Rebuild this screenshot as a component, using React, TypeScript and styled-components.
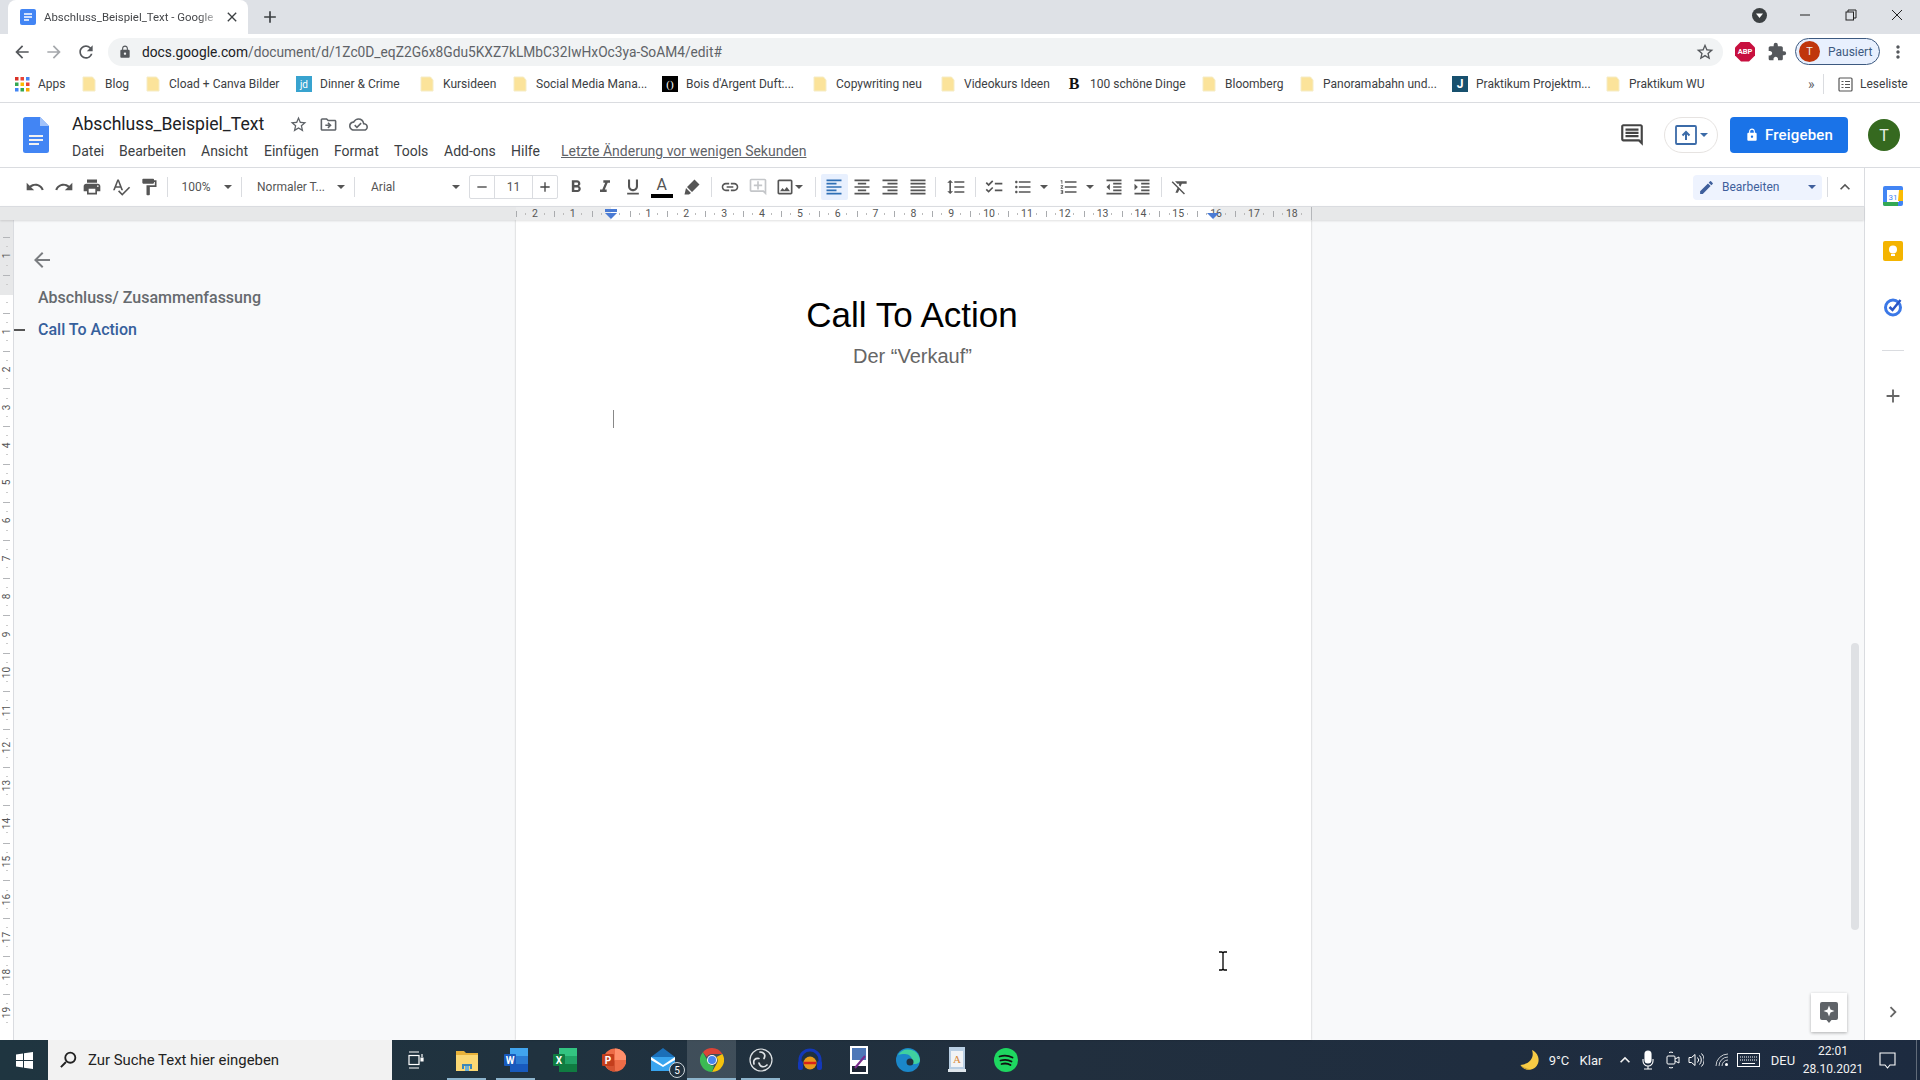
import React from "react";
import styled, { createGlobalStyle } from "styled-components";
import {
  MdArrowBack, MdArrowForward, MdRefresh, MdLock, MdStarBorder, MdExtension, MdMoreVert,
  MdOutlineDriveFileMove, MdOutlineCloudDone, MdOutlineComment, MdUndo, MdRedo, MdPrint,
  MdSpellcheck, MdFormatPaint, MdFormatBold, MdFormatItalic, MdFormatUnderlined,
  MdLink, MdOutlineAddComment, MdOutlineImage, MdFormatAlignLeft, MdFormatAlignCenter,
  MdFormatAlignRight, MdFormatAlignJustify, MdFormatLineSpacing, MdChecklist,
  MdFormatListBulleted, MdFormatListNumbered, MdFormatIndentDecrease, MdFormatIndentIncrease,
  MdFormatClear, MdEdit, MdKeyboardArrowUp, MdKeyboardArrowRight, MdAdd, MdRemove, MdClose,
  MdSearch,
} from "react-icons/md";

const Global = createGlobalStyle`
  html, body { margin: 0; padding: 0; width: 1920px; height: 1080px; overflow: hidden; background: #fff; }
  * { box-sizing: border-box; }
  body { font-family: Roboto, "Liberation Sans", sans-serif; color: #444; }
`;

const Root = styled.div`
  width: 1920px; height: 1080px; display: flex; flex-direction: column; overflow: hidden;
`;

/* ---------- browser chrome ---------- */
const TabStrip = styled.div`
  height: 34px; flex: none; background: #dee1e6; display: flex; align-items: stretch; padding-left: 8px;
`;
const Tab = styled.div`
  width: 240px; background: #fff; border-radius: 8px 8px 0 0; display: flex; align-items: center;
  padding: 0 8px 0 12px; gap: 8px;
`;
const TabTitle = styled.span`
  flex: 1; font-size: 11.4px; color: #45474a; white-space: nowrap;
  -webkit-mask-image: linear-gradient(90deg, #000 90%, rgba(0,0,0,.3));
  mask-image: linear-gradient(90deg, #000 90%, rgba(0,0,0,.3));
`;
const NewTab = styled.div`
  width: 44px; display: flex; align-items: center; justify-content: center; color: #3c4043; font-size: 20px;
`;
const Flex = styled.div`flex: 1;`;
const WinControls = styled.div`
  display: flex; align-items: center; height: 30px; color: #222;
`;
const WinButton = styled.div<{ $w: number }>`
  width: ${(p) => p.$w}px; display: flex; align-items: center; justify-content: center;
`;
const NavBar = styled.div`
  height: 29px; flex: none; display: flex; align-items: center; padding-left: 6px; background: #fff; margin-top: 3px;
`;
const NavBtn = styled.div<{ $muted?: boolean }>`
  width: 32px; display: flex; justify-content: center; font-size: 20px; color: ${(p) => (p.$muted ? "#a5a8ac" : "#55585c")};
`;
const Omnibox = styled.div`
  width: 1615px; height: 28px; margin-left: 6px; background: #f1f3f4; border-radius: 14px; display: flex;
  align-items: center; padding: 0 8px 0 10px; font-size: 13.75px; color: #5f6368;
`;
const Host = styled.span`color: #202124;`;
const LockSlot = styled.span`
  width: 24px; display: flex; font-size: 14px; color: #55585c;
`;
const AbpBadge = styled.span`
  width: 20px; height: 20px; margin-left: 12px; background: #c8103f; color: #fff; font-size: 7.5px; font-weight: 700;
  display: flex; align-items: center; justify-content: center;
  clip-path: polygon(30% 0, 70% 0, 100% 30%, 100% 70%, 70% 100%, 30% 100%, 0 70%, 0 30%);
`;
const NavIcon = styled.span<{ $w: number; $ml?: number }>`
  width: ${(p) => p.$w}px; margin-left: ${(p) => p.$ml ?? 0}px; display: flex; justify-content: center; font-size: 20px; color: #55585c;
`;
const Paused = styled.div`
  width: 85px; height: 27px; margin-left: 2px; border: 1px solid #3d5a80; border-radius: 14px; background: #e8f0fe;
  display: flex; align-items: center; gap: 8px; padding-left: 3px; font-size: 12px; color: #3d5a80;
`;
const PausedAvatar = styled.span`
  width: 21px; height: 21px; border-radius: 50%; background: #c0360c; color: #eee; font-size: 11px;
  display: flex; align-items: center; justify-content: center;
`;

const Bookmarks = styled.div`
  height: 37px; flex: none; display: flex; align-items: center; padding-left: 15px; border-bottom: 1px solid #dadce0;
  font-size: 12px; color: #3c4043; background: #fff;
`;
const Bookmark = styled.div<{ $w: number }>`
  width: ${(p) => p.$w}px; display: flex; align-items: center; gap: 8px; white-space: nowrap; flex: none;
`;
const FavJd = styled.span`
  width: 16px; height: 16px; background: #38a3cf; color: #fff; font-size: 10px; display: flex; align-items: center; justify-content: center; flex: none;
`;
const FavBois = styled(FavJd)`background: #000; font-family: "Liberation Serif", serif; font-size: 11px;`;
const FavB = styled(FavJd)`background: transparent; color: #111; font-family: "Liberation Serif", serif; font-weight: 700; font-size: 16px;`;
const FavJ = styled(FavJd)`background: #17506e; font-weight: 700; font-size: 12px;`;
const BmEnd = styled.div`
  display: flex; align-items: center; color: #3c4043; flex: none;
`;
const Chevrons = styled.span`width: 13px; font-size: 14px; color: #5f6368;`;
const BmSep = styled.span`width: 1px; height: 20px; background: #dadce0; margin: 0 14px 0 2px;`;

/* ---------- docs header ---------- */
const DocHeader = styled.div`
  height: 65px; flex: none; display: flex; align-items: center; padding: 0 20px 0 23px; border-bottom: 1px solid #dadce0; background: #fff;
`;
const TitleCol = styled.div`
  margin-left: 23px; display: flex; flex-direction: column; align-self: flex-start; padding-top: 10px;
`;
const TitleRow = styled.div`
  display: flex; align-items: center; height: 22px;
`;
const DocTitle = styled.span`
  font-size: 17.6px; color: #202124; width: 211px;
`;
const TitleIcon = styled.span<{ $w: number }>`
  width: ${(p) => p.$w}px; display: flex; justify-content: center; font-size: 19px; color: #5f6368;
`;
const MenuRow = styled.div`
  display: flex; align-items: center; height: 26px; font-size: 14px; color: #3c4043; margin-top: 3px;
`;
const MenuItem = styled.span<{ $w: number }>`
  width: ${(p) => p.$w}px; white-space: nowrap;
`;
const LastEdit = styled.span`
  margin-left: 20px; color: #5f6368; text-decoration: underline; white-space: nowrap;
`;
const CommentBtn = styled.span`
  font-size: 26px; display: flex; color: #444; margin-right: 19px;
`;
const PresentBtn = styled.div`
  width: 54px; height: 36px; border: 1px solid #e6e3e1; border-radius: 18px; display: flex; align-items: center; justify-content: center; gap: 3px; color: #3b6ba8; margin-right: 12px;
`;
const ShareBtn = styled.div`
  width: 118px; height: 36px; background: #1a73e8; color: #fff; border-radius: 4px; display: flex; align-items: center; justify-content: center; gap: 6px;
  font-size: 15px; font-weight: 500; letter-spacing: 0.2px; margin-right: 20px;
`;
const Avatar = styled.div`
  width: 32px; height: 32px; border-radius: 50%; background: #35691f; color: #e8efe4; font-size: 16px; display: flex; align-items: center; justify-content: center;
`;

/* ---------- workspace ---------- */
const Workspace = styled.div`
  flex: 1; display: flex; min-height: 0;
`;
const Main = styled.div`
  flex: 1; display: flex; flex-direction: column; min-width: 0;
`;
const Toolbar = styled.div`
  height: 38px; flex: none; display: flex; align-items: center; padding-left: 21px; padding-right: 6px; background: #fff; color: #555;
`;
const Cell = styled.div<{ $w: number; $ml?: number; $active?: boolean; $faded?: boolean }>`
  width: ${(p) => p.$w}px; height: 26px; margin-left: ${(p) => p.$ml ?? 0}px; flex: none; display: flex; align-items: center; justify-content: center;
  font-size: 20px; border-radius: 2px; color: ${(p) => (p.$active ? "#2f6fb5" : p.$faded ? "#c4c6c9" : "#555")};
  background: ${(p) => (p.$active ? "#e8f0fe" : "transparent")};
`;
const SplitCell = styled(Cell)<{ $pl: number }>`
  justify-content: flex-start; padding-left: ${(p) => p.$pl}px;
`;
const Sep = styled.span<{ $ml: number; $mr: number }>`
  width: 1px; height: 20px; background: #dadce0; flex: none; margin: 0 ${(p) => p.$mr}px 0 ${(p) => p.$ml}px;
`;
const Drop = styled.div<{ $w: number; $pl: number }>`
  width: ${(p) => p.$w}px; padding-left: ${(p) => p.$pl}px; padding-right: 6px; flex: none; height: 26px; display: flex; align-items: center; justify-content: space-between;
  font-size: 12px; color: #555; white-space: nowrap;
`;
const Caret = styled.span<{ $c?: string; $ml?: number }>`
  width: 0; height: 0; margin-left: ${(p) => p.$ml ?? 0}px; border-left: 4px solid transparent; border-right: 4px solid transparent; border-top: 4px solid ${(p) => p.$c ?? "#555"}; flex: none;
`;
const SizeBox = styled.div`
  width: 89px; height: 24px; margin-left: 3px; border: 1px solid #dadce0; border-radius: 2px; display: flex; align-items: center; flex: none;
`;
const SizeBtn = styled.span`
  width: 24px; height: 100%; display: flex; align-items: center; justify-content: center; font-size: 16px; color: #444; flex: none;
`;
const SizeValue = styled.span`
  flex: 1; height: 100%; border-left: 1px solid #dadce0; border-right: 1px solid #dadce0; display: flex; align-items: center; justify-content: center; font-size: 12px; color: #555;
`;
const TextColor = styled.span`
  display: flex; flex-direction: column; align-items: center; font-size: 16px; color: #555; line-height: 16px;
`;
const ColorBar = styled.span`
  width: 22px; height: 4px; background: #000; margin-top: 1px;
`;
const EditMode = styled.div`
  width: 129px; height: 25px; margin-left: auto; background: #eef3fe; border-radius: 4px; display: flex; align-items: center; padding: 0 6px 0 5px; gap: 7px; font-size: 12px; color: #3f5f9c; flex: none;
`;
const EditIcon = styled.span`display: flex; font-size: 17px;`;
const EditLabel = styled.span`flex: 1;`;

const Ruler = styled.div`
  height: 14px; flex: none; background: #e7e8e9; border-top: 1px solid #dadce0; box-shadow: 0 1px 2px rgba(0,0,0,.12); display: flex; padding-left: 516px; position: relative; z-index: 2;
`;
const RulerTrack = styled.div`
  display: flex; background: linear-gradient(90deg, #ebeced 95px, #fff 95px, #fff 697px, #ebeced 697px);
  border-right: 1px solid #b5b7ba;
`;
const RulerCell = styled.div`
  width: 37.85px; flex: none; display: flex; align-items: center; justify-content: center; font-size: 10.5px; color: #555;
  background-image: linear-gradient(#a9abae, #a9abae), linear-gradient(#bbb, #bbb), linear-gradient(#bbb, #bbb);
  background-size: 1px 6px, 1px 2px, 1px 2px;
  background-position: 0 center, 25% center, 75% center;
  background-repeat: no-repeat;
`;
const MarginMark = styled.span<{ $x: number }>`
  position: absolute; left: ${(p) => p.$x}px; top: 6px; width: 0; height: 0;
  border-left: 6px solid transparent; border-right: 6px solid transparent; border-top: 6px solid #4a7bd4;
`;
const IndentMark = styled.span<{ $x: number }>`
  position: absolute; left: ${(p) => p.$x}px; top: 2px; width: 12px; height: 3px; background: #4a7bd4;
`;
const Content = styled.div`
  flex: 1; display: flex; min-height: 0; background: #f8f9fa; position: relative;
`;
const VRuler = styled.div`
  width: 14px; flex: none; border-right: 1px solid #dadce0; overflow: hidden; padding-top: 17px;
  background: linear-gradient(#e7e8e9 0 75px, #fff 75px);
`;
const VCell = styled.div`
  height: 37.85px; display: flex; align-items: center; justify-content: center; font-size: 10px; color: #555;
  background-image: linear-gradient(#b4b6b9, #b4b6b9), linear-gradient(#ccc, #ccc), linear-gradient(#ccc, #ccc);
  background-size: 7px 1px, 2px 1px, 2px 1px;
  background-position: center 0, center 25%, center 75%;
  background-repeat: no-repeat;
`;
const VNum = styled.span`transform: rotate(-90deg);`;
const Sidebar = styled.div`
  width: 502px; flex: none; padding-top: 28px;
`;
const BackIcon = styled.div`
  margin-left: 16px; font-size: 24px; height: 24px; display: flex; color: #7a7d80;
`;
const OutlineHead = styled.div`
  margin: 16px 0 0 24px; font-size: 16px; line-height: 20px; font-weight: 500; color: #666a6e;
`;
const OutlineRow = styled.div`
  margin-top: 12px; display: flex; align-items: center; gap: 13px; font-size: 16px; line-height: 20px; font-weight: 500; color: #36609c;
`;
const Dash = styled.span`
  width: 11px; height: 1.5px; background: #555;
`;
const Page = styled.div`
  width: 795px; flex: none; background: #fff; box-shadow: 0 0 2px rgba(0,0,0,.25); padding-top: 75px;
  font-family: "Liberation Sans", Arial, sans-serif; display: flex; flex-direction: column;
`;
const PageTitle = styled.div`
  text-align: center; font-size: 35px; line-height: 40px; color: #000; padding-right: 3px;
`;
const PageSub = styled.div`
  text-align: center; font-size: 20px; line-height: 24px; color: #666; margin-top: 9px; padding-right: 2px;
`;
const Caret2 = styled.span`
  width: 1px; height: 18px; background: #888; margin: 42px 0 0 97px;
`;
const Scrollbar = styled.div`
  position: absolute; left: 1851px; top: 423px; width: 8px; height: 287px; background: #dfe1e4; border-radius: 4px;
`;
const ExploreBtn = styled.div`
  position: absolute; left: 1811px; top: 773px; width: 36px; height: 39px; background: #fff; box-shadow: 0 1px 3px rgba(0,0,0,.3); display: flex; align-items: center; justify-content: center;
`;
const IBeam = styled.div`
  position: absolute; left: 1218px; top: 731px; display: flex;
`;
const SidePanel = styled.div`
  width: 56px; flex: none; border-left: 1px solid #dadce0; display: flex; flex-direction: column; align-items: center; padding-top: 18px; background: #fff; position: relative;
`;
const SideApp = styled.div<{ $mt: number }>`
  margin-top: ${(p) => p.$mt}px; height: 20px; display: flex; align-items: center; justify-content: center;
`;
const SideSep = styled.span`
  width: 22px; height: 1px; background: #dadce0; margin-top: 33px;
`;
const SidePlus = styled.span`
  font-size: 22px; display: flex; color: #666; margin-top: 34px;
`;
const SideChevron = styled.span`
  margin-top: auto; margin-bottom: 17px; font-size: 22px; display: flex; color: #666;
`;

/* ---------- taskbar ---------- */
const Taskbar = styled.div`
  height: 40px; flex: none; display: flex; align-items: stretch; background: linear-gradient(90deg, #1f3540, #212f3e 55%, #1d2b40); color: #fff;
`;
const StartBtn = styled.div`
  width: 48px; flex: none; display: flex; align-items: center; justify-content: center;
`;
const SearchBox = styled.div`
  width: 344px; flex: none; background: #f2f2f2; display: flex; align-items: center; padding-left: 9px; gap: 9px; color: #222; font-size: 14.9px;
`;
const TaskSlot = styled.div<{ $w: number; $ml?: number; $run?: boolean; $hi?: boolean }>`
  width: ${(p) => p.$w}px; margin-left: ${(p) => p.$ml ?? 0}px; flex: none; display: flex; align-items: center; justify-content: center; position: relative;
  background: ${(p) => (p.$hi ? "rgba(255,255,255,.14)" : "transparent")};
  &::after {
    content: "";
    display: ${(p) => (p.$run ? "block" : "none")};
    position: absolute; bottom: 0; height: 2px; background: #8db4cc;
    left: ${(p) => (p.$hi ? 0 : 5)}px; right: ${(p) => (p.$hi ? 0 : 5)}px;
  }
`;
const MailBadge = styled.span`
  position: absolute; right: 2px; bottom: 2px; width: 16px; height: 16px; border-radius: 50%; background: #22323f; border: 1px solid #cfd6dc; color: #fff;
  font-size: 10px; display: flex; align-items: center; justify-content: center;
`;
const Tray = styled.div`
  margin-left: auto; display: flex; align-items: center; font-size: 13px; color: #f2f2f2; flex: none;
`;
const TrayItem = styled.div<{ $w: number; $ml?: number }>`
  width: ${(p) => p.$w}px; margin-left: ${(p) => p.$ml ?? 0}px; display: flex; align-items: center; justify-content: center; flex: none;
`;
const Clock = styled.div`
  width: 72px; display: flex; flex-direction: column; align-items: center; font-size: 12px; line-height: 18px; flex: none;
`;
const TrayEdge = styled.span`
  width: 4px; height: 40px; margin-left: 11px; border-left: 1px solid rgba(255,255,255,.3); flex: none;
`;

const DocFav = () => (
  <svg width="16" height="16" viewBox="0 0 16 16" style={{ flex: "none" }}>
    <rect width="16" height="16" rx="2" fill="#4285f4" />
    <path d="M4 5h8M4 8h8M4 11h5" stroke="#fff" strokeWidth="1.5" />
  </svg>
);
const DocLogo = () => (
  <svg width="26" height="36" viewBox="0 0 26 36" style={{ flex: "none" }}>
    <path d="M2.5 0H17l9 9v24.5a2.5 2.5 0 0 1-2.5 2.5h-21A2.5 2.5 0 0 1 0 33.5v-31A2.5 2.5 0 0 1 2.5 0z" fill="#4285f4" />
    <path d="M17 0l9 9h-9z" fill="#a1c2fa" />
    <path d="M6 18h14v2H6zM6 22h14v2H6zM6 26h10v2H6z" fill="#f1f1f1" />
  </svg>
);
const Folder = () => (
  <svg width="15" height="16" viewBox="0 0 15 16" style={{ flex: "none" }}>
    <path d="M1 1h9.5L13 4v11H1z" fill="#fbe39a" stroke="#f5ecc6" />
  </svg>
);
const AppsIcon = () => (
  <svg width="15" height="15" viewBox="0 0 15 15" style={{ flex: "none" }}>
    {[0, 1, 2].flatMap((r) =>
      [0, 1, 2].map((c) => (
        <rect key={`${r}${c}`} x={c * 5.5} y={r * 5.5} width="3.5" height="3.5"
          fill={[["#d93025", "#ea4335", "#4285f4"], ["#34a853", "#fbbc04", "#ea4335"], ["#4285f4", "#34a853", "#f9ab00"]][r][c]} />
      ))
    )}
  </svg>
);
const ReadingList = () => (
  <svg width="15" height="15" viewBox="0 0 15 15" fill="none" stroke="#555" strokeWidth="1.2" style={{ marginRight: 7 }}>
    <rect x="1" y="1" width="13" height="13" rx="1" />
    <path d="M3.5 4.5h2M3.5 7.5h2M3.5 10.5h2M7 4.5h5M7 7.5h5M7 10.5h5" />
  </svg>
);
const ProfileDot = () => (
  <svg width="17" height="17" viewBox="0 0 17 17">
    <circle cx="8.5" cy="8.5" r="7.5" fill="#3c4043" />
    <path d="M5 6.5h7L8.5 11z" fill="#fff" />
  </svg>
);
const PresentIcon = () => (
  <svg width="22" height="20" viewBox="0 0 22 20" fill="none">
    <rect x="1" y="1" width="20" height="18" rx="1" stroke="#3b6ba8" strokeWidth="1.8" />
    <path d="M11 15V8M7.5 10.5L11 7l3.5 3.5" stroke="#3b6ba8" strokeWidth="2" />
  </svg>
);
const HighlightPen = () => (
  <svg width="18" height="18" viewBox="0 0 18 18">
    <path d="M11.5 1.5l5 5-7.5 7.5-5-5zM3 10l5 5-2 1.5H1.5z" fill="#555" />
  </svg>
);
const CalendarIcon = () => (
  <svg width="20" height="20" viewBox="0 0 20 20">
    <rect width="20" height="20" rx="2" fill="#4285f4" />
    <rect x="4" y="4" width="12" height="12" fill="#fff" />
    <path d="M0 16h15v4H2a2 2 0 0 1-2-2z" fill="#34a853" />
    <path d="M16 4h4v11h-5z" fill="#fbbc04" />
    <text x="10" y="14" textAnchor="middle" fontSize="8" fontFamily="Roboto" fill="#4285f4">31</text>
  </svg>
);
const KeepIcon = () => (
  <svg width="20" height="20" viewBox="0 0 20 20">
    <rect width="20" height="20" rx="2" fill="#f4b400" />
    <circle cx="10" cy="8.5" r="4" fill="#fff" />
    <rect x="8" y="13" width="4" height="2" fill="#fff" />
  </svg>
);
const TasksIcon = () => (
  <svg width="20" height="20" viewBox="0 0 20 20" fill="none">
    <circle cx="10" cy="10.5" r="7.5" stroke="#3b78e7" strokeWidth="3" />
    <path d="M6.5 10l3 3 8-10" stroke="#2a56c6" strokeWidth="2.5" />
  </svg>
);
const ExploreIcon = () => (
  <svg width="18" height="22" viewBox="0 0 18 22">
    <path d="M2 0h14a2 2 0 0 1 2 2v14a2 2 0 0 1-2 2h-4.5L9 21l-2.5-3H2a2 2 0 0 1-2-2V2a2 2 0 0 1 2-2z" fill="#5f6368" />
    <path d="M9 3.5l1.5 4 4 1.5-4 1.5-1.5 4-1.5-4-4-1.5 4-1.5z" fill="#fff" />
  </svg>
);
const IBeamIcon = () => (
  <svg width="10" height="20" viewBox="0 0 10 20" fill="none">
    <path d="M1 1h3l1 1 1-1h3M5 2v16M1 19h3l1-1 1 1h3" stroke="#000" strokeWidth="1.3" />
  </svg>
);
const WinLogo = () => (
  <svg width="17" height="17" viewBox="0 0 17 17">
    <path d="M0 2.4L7 1.4V8H0zM8 1.3L17 0v8H8zM0 9h7v6.6L0 14.6zM8 9h9v8l-9-1.3z" fill="#fff" />
  </svg>
);
const TaskView = () => (
  <svg width="16" height="20" viewBox="0 0 16 20" fill="none" stroke="#fff" strokeWidth="1.2">
    <rect x="1" y="5.5" width="10" height="9" />
    <path d="M1 2h10M1 18h10M14 4v3" />
    <path d="M13 8h2v3h-2z" fill="#fff" />
  </svg>
);
const Explorer = () => (
  <svg width="22" height="24" viewBox="0 0 22 24">
    <path d="M0 3h8l2 2h12v18H0z" fill="#e8b23a" />
    <path d="M0 7h22v16H0z" fill="#fbd874" />
    <path d="M6 16h10v5h-2v-3H8v3H6z" fill="#3d87b8" />
    <rect x="9" y="18" width="4" height="5" fill="#6db1d8" />
  </svg>
);
const OfficeIcon = ({ dark, light, mid, letter }: { dark: string; light: string; mid: string; letter: string }) => (
  <svg width="24" height="26" viewBox="0 0 24 26">
    <rect x="6" y="1" width="18" height="24" rx="1.5" fill={mid} />
    <rect x="6" y="1" width="18" height="8" fill={light} />
    <rect x="6" y="17" width="18" height="8" fill={dark} />
    <rect x="0" y="7" width="12" height="12" rx="1" fill={dark} />
    <text x="6" y="16.5" textAnchor="middle" fontSize="10" fontWeight="700" fontFamily="Roboto" fill="#fff">{letter}</text>
  </svg>
);
const Ppt = () => (
  <svg width="24" height="26" viewBox="0 0 24 26">
    <circle cx="13" cy="13" r="11.5" fill="#ed6c47" />
    <path d="M13 1.5A11.5 11.5 0 0 1 24.5 13H13z" fill="#ff8f6b" />
    <path d="M13 13v11.5A11.5 11.5 0 0 1 4 20z" fill="#d35230" />
    <rect x="0" y="7" width="12" height="12" rx="1" fill="#c43e1c" />
    <text x="6" y="16.5" textAnchor="middle" fontSize="10" fontWeight="700" fontFamily="Roboto" fill="#fff">P</text>
  </svg>
);
const MailIcon = () => (
  <svg width="24" height="26" viewBox="0 0 24 26">
    <path d="M12 1l12 9H0z" fill="#1b6fb8" />
    <path d="M0 10h24v14H0z" fill="#38a4ee" />
    <path d="M0 10l12 8 12-8v3l-12 7L0 13z" fill="#fff" />
  </svg>
);
const ChromeIcon = () => (
  <svg width="24" height="24" viewBox="0 0 24 24">
    <path d="M12 0a12 12 0 0 1 10.4 6H12a6 6 0 0 0-5.2 3L2.9 4.2A12 12 0 0 1 12 0z" fill="#db4437" />
    <path d="M22.4 6A12 12 0 0 1 12 24l4.8-8.5A6 6 0 0 0 16.5 9z" fill="#f4c20d" />
    <path d="M12 24A12 12 0 0 1 2.9 4.2L7.5 12.500A6 6 0 0 0 14 17.700z" fill="#3cba54" />
    <circle cx="12" cy="12" r="5" fill="#fff" />
    <circle cx="12" cy="12" r="4" fill="#4885ed" />
  </svg>
);
const ObsIcon = () => (
  <svg width="24" height="24" viewBox="0 0 24 24" fill="none">
    <circle cx="12" cy="12" r="11" fill="#27323b" stroke="#dfe3e6" strokeWidth="1.2" />
    <path d="M11 4c4 0 6 3 4 6.5M5 16c-1-4 1-6 5-5.5M18 17c-3 3-7 2-8-2" stroke="#dfe3e6" strokeWidth="1.7" strokeLinecap="round" />
    <circle cx="12" cy="12" r="1.2" fill="#27323b" />
  </svg>
);
const AudacityIcon = () => (
  <svg width="26" height="24" viewBox="0 0 26 24" fill="none">
    <path d="M3 17V12a10 10 0 0 1 20 0v5" stroke="#1438b8" strokeWidth="3" />
    <rect x="1" y="13" width="5" height="9" rx="2" fill="#1438b8" />
    <rect x="20" y="13" width="5" height="9" rx="2" fill="#1438b8" />
    <circle cx="13" cy="15" r="6.5" fill="#e89a1c" />
    <path d="M7 15h12" stroke="#d8211a" strokeWidth="2.5" />
  </svg>
);
const WritingIcon = () => (
  <svg width="18" height="28" viewBox="0 0 18 28">
    <rect width="18" height="28" fill="#fff" />
    <path d="M2 2h14v12H2z" fill="#4e78b8" />
    <path d="M2 20h14v6H2z" fill="#1c2433" />
    <path d="M15 10L5 22" stroke="#7a2a8c" strokeWidth="2" />
  </svg>
);
const EdgeIcon = () => (
  <svg width="24" height="26" viewBox="0 0 24 26">
    <circle cx="12" cy="13" r="12" fill="#1b87c9" />
    <path d="M2 8A12 12 0 0 1 24 13c0 3-3 4.5-6 4-3 0-2-2-2-4 0-3-3-6-7-6-3 0-5 0-7 1z" fill="#3fd0a0" />
    <circle cx="14" cy="15" r="3.5" fill="#21303d" />
  </svg>
);
const FontIcon = () => (
  <svg width="18" height="26" viewBox="0 0 18 26">
    <rect x="1" y="0" width="16" height="24" fill="#b9cfe4" />
    <rect x="3" y="4" width="12" height="16" fill="#f2f4f6" />
    <text x="9" y="16" textAnchor="middle" fontSize="11" fontFamily="Liberation Serif" fill="#d98a3c">A</text>
    <rect x="0" y="22" width="18" height="3" fill="#dfe6ec" />
  </svg>
);
const SpotifyIcon = () => (
  <svg width="24" height="24" viewBox="0 0 24 24" fill="none">
    <circle cx="12" cy="12" r="12" fill="#1ed760" />
    <path d="M5.5 8.5c4-1.2 9-1 13 1M6.5 12.5c3.5-1 8-.8 11 1M7.5 16c3-.8 6.5-.6 9 1" stroke="#111" strokeWidth="1.8" strokeLinecap="round" />
  </svg>
);
const Moon = () => (
  <svg width="19" height="20" viewBox="0 0 19 20">
    <path d="M12 0c2.5 7-1.5 14-11.5 15C3 19 7.5 20.5 11 19.5 17 18 20 12 18 6.500 17 3.500 14.500 1 12 0z" fill="#f7cb45" />
    <path d="M.5 15C3 19 7.500 20.500 11 19.500 8 19 4 18 .5 15z" fill="#c9a02e" />
  </svg>
);
const Mic = () => (
  <svg width="12" height="20" viewBox="0 0 12 20" fill="none" stroke="#fff" strokeWidth="1.1">
    <rect x="3" y="1" width="6" height="12" rx="3" fill="#fff" />
    <path d="M1 9v2a5 5 0 0 0 10 0V9M6 16v3M2 19h8" />
  </svg>
);
const Cam = () => (
  <svg width="14" height="20" viewBox="0 0 14 20" fill="none" stroke="#fff" strokeWidth="1">
    <rect x="1" y="6" width="8" height="8" rx="1" />
    <path d="M9 9l4-2v6l-4-2M3 2.5a5 5 0 0 1 4 0M3 17.5a5 5 0 0 0 4 0" />
  </svg>
);
const Speaker = () => (
  <svg width="16" height="16" viewBox="0 0 16 16" fill="none" stroke="#fff" strokeWidth="1">
    <path d="M1 5.5h2.5L7 2.5v11l-3.500-3H1zM9.500 5.500a3.500 3.500 0 0 1 0 5M11.500 3.500a6.500 6.500 0 0 1 0 9M13.500 1.500a9 9 0 0 1 0 13" />
  </svg>
);
const Wifi = () => (
  <svg width="14" height="14" viewBox="0 0 14 14" fill="none" stroke="#c8ccd0" strokeWidth="1">
    <path d="M1 13A12 12 0 0 1 13 1M4 13a9 9 0 0 1 9-9M7 13a6 6 0 0 1 6-6" />
    <circle cx="11.5" cy="11.5" r="1.5" fill="#fff" stroke="none" />
  </svg>
);
const Keyboard = () => (
  <svg width="23" height="14" viewBox="0 0 23 14" fill="none" stroke="#fff" strokeWidth="1">
    <rect x=".5" y=".5" width="22" height="13" />
    <path d="M3 4h17M3 7h17" strokeDasharray="1 1" />
    <path d="M5 10.5h13" />
  </svg>
);
const Notify = () => (
  <svg width="17" height="17" viewBox="0 0 17 17" fill="none" stroke="#fff" strokeWidth="1.1">
    <path d="M1 1h15v12h-5l-2.5 3L6 13H1z" />
  </svg>
);

const bookmarks: { w: number; label: string; icon: React.ReactNode }[] = [
  { w: 67, label: "Apps", icon: <AppsIcon /> },
  { w: 64, label: "Blog", icon: <Folder /> },
  { w: 150, label: "Cload + Canva Bilder", icon: <Folder /> },
  { w: 124, label: "Dinner & Crime", icon: <FavJd>jd</FavJd> },
  { w: 93, label: "Kursideen", icon: <Folder /> },
  { w: 149, label: "Social Media Mana...", icon: <Folder /> },
  { w: 151, label: "Bois d'Argent Duft:...", icon: <FavBois>()</FavBois> },
  { w: 128, label: "Copywriting neu", icon: <Folder /> },
  { w: 125, label: "Videokurs Ideen", icon: <Folder /> },
  { w: 136, label: "100 schöne Dinge", icon: <FavB>B</FavB> },
  { w: 98, label: "Bloomberg", icon: <Folder /> },
  { w: 152, label: "Panoramabahn und...", icon: <Folder /> },
  { w: 154, label: "Praktikum Projektm...", icon: <FavJ>J</FavJ> },
  { w: 202, label: "Praktikum WU", icon: <Folder /> },
];
const menu: [string, number][] = [
  ["Datei", 47], ["Bearbeiten", 82], ["Ansicht", 63], ["Einfügen", 70], ["Format", 60],
  ["Tools", 50], ["Add-ons", 67], ["Hilfe", 30],
];
const rulerNums = ["2", "1", "", "1", "2", "3", "4", "5", "6", "7", "8", "9", "10", "11", "12", "13", "14", "15", "16", "17", "18"];
const vNums = ["1", "", ...Array.from({ length: 19 }, (_, i) => String(i + 1))];

export default function App() {
  return (
    <Root>
      <Global />
      <TabStrip>
        <Tab>
          <DocFav />
          <TabTitle>Abschluss_Beispiel_Text - Google</TabTitle>
          <MdClose size={16} color="#3c4043" />
        </Tab>
        <NewTab><MdAdd /></NewTab>
        <Flex />
        <WinControls>
          <WinButton $w={46}><ProfileDot /></WinButton>
          <WinButton $w={46}>
            <svg width="12" height="12" viewBox="0 0 12 12"><path d="M1 6h10" stroke="#222" /></svg>
          </WinButton>
          <WinButton $w={46}>
            <svg width="12" height="12" viewBox="0 0 12 12" fill="none" stroke="#222"><rect x="1" y="3" width="7.5" height="8" /><path d="M3 3V1h8v8H8.5" /></svg>
          </WinButton>
          <WinButton $w={46}>
            <svg width="12" height="12" viewBox="0 0 12 12" stroke="#222"><path d="M1 1l10 10M11 1L1 11" /></svg>
          </WinButton>
        </WinControls>
      </TabStrip>

      <NavBar>
        <NavBtn><MdArrowBack /></NavBtn>
        <NavBtn $muted><MdArrowForward /></NavBtn>
        <NavBtn><MdRefresh /></NavBtn>
        <Omnibox>
          <LockSlot><MdLock /></LockSlot>
          <Host>docs.google.com</Host>/document/d/1Zc0D_eqZ2G6x8Gdu5KXZ7kLMbC32IwHxOc3ya-SoAM4/edit#
          <Flex />
          <NavIcon $w={20}><MdStarBorder /></NavIcon>
        </Omnibox>
        <AbpBadge>ABP</AbpBadge>
        <NavIcon $w={32} $ml={6}><MdExtension /></NavIcon>
        <Paused><PausedAvatar>T</PausedAvatar>Pausiert</Paused>
        <NavIcon $w={36}><MdMoreVert /></NavIcon>
      </NavBar>

      <Bookmarks>
        {bookmarks.map((b) => (
          <Bookmark key={b.label} $w={b.w}>{b.icon}{b.label}</Bookmark>
        ))}
        <BmEnd>
          <Chevrons>»</Chevrons>
          <BmSep />
          <ReadingList />
          Leseliste
        </BmEnd>
      </Bookmarks>

      <DocHeader>
        <DocLogo />
        <TitleCol>
          <TitleRow>
            <DocTitle>Abschluss_Beispiel_Text</DocTitle>
            <TitleIcon $w={30}><MdStarBorder /></TitleIcon>
            <TitleIcon $w={30}><MdOutlineDriveFileMove /></TitleIcon>
            <TitleIcon $w={30}><MdOutlineCloudDone /></TitleIcon>
          </TitleRow>
          <MenuRow>
            {menu.map(([m, w]) => <MenuItem key={m} $w={w}>{m}</MenuItem>)}
            <LastEdit>Letzte Änderung vor wenigen Sekunden</LastEdit>
          </MenuRow>
        </TitleCol>
        <Flex />
        <CommentBtn><MdOutlineComment /></CommentBtn>
        <PresentBtn><PresentIcon /><Caret $c="#3b6ba8" /></PresentBtn>
        <ShareBtn><MdLock size={14} />Freigeben</ShareBtn>
        <Avatar>T</Avatar>
      </DocHeader>

      <Workspace>
        <Main>
          <Toolbar>
            <Cell $w={28.5}><MdUndo /></Cell>
            <Cell $w={28.5}><MdRedo /></Cell>
            <Cell $w={28.5}><MdPrint /></Cell>
            <Cell $w={28}><MdSpellcheck /></Cell>
            <Cell $w={28}><MdFormatPaint /></Cell>
            <Sep $ml={4} $mr={3} />
            <Drop $w={67.5} $pl={11}>100%<Caret /></Drop>
            <Sep $ml={3} $mr={3} />
            <Drop $w={106} $pl={12}>Normaler T...<Caret /></Drop>
            <Sep $ml={3} $mr={3} />
            <Drop $w={108} $pl={13}>Arial<Caret /></Drop>
            <SizeBox>
              <SizeBtn><MdRemove /></SizeBtn>
              <SizeValue>11</SizeValue>
              <SizeBtn><MdAdd /></SizeBtn>
            </SizeBox>
            <Cell $w={28.5} $ml={4}><MdFormatBold /></Cell>
            <Cell $w={28.5}><MdFormatItalic /></Cell>
            <Cell $w={28.5}><MdFormatUnderlined /></Cell>
            <Cell $w={28.5}><TextColor>A<ColorBar /></TextColor></Cell>
            <Cell $w={31}><HighlightPen /></Cell>
            <Sep $ml={3.5} $mr={4} />
            <Cell $w={28.5}><MdLink /></Cell>
            <Cell $w={28.5} $faded><MdOutlineAddComment /></Cell>
            <SplitCell $w={42} $pl={2}><MdOutlineImage /><Caret /></SplitCell>
            <Sep $ml={0} $mr={5} />
            <Cell $w={27} $active><MdFormatAlignLeft /></Cell>
            <Cell $w={28}><MdFormatAlignCenter /></Cell>
            <Cell $w={28}><MdFormatAlignRight /></Cell>
            <Cell $w={28}><MdFormatAlignJustify /></Cell>
            <Sep $ml={3} $mr={3} />
            <Cell $w={28} $ml={3}><MdFormatLineSpacing /></Cell>
            <Sep $ml={5} $mr={3} />
            <Cell $w={28} $ml={1}><MdChecklist /></Cell>
            <SplitCell $w={43} $ml={1} $pl={4}><MdFormatListBulleted /><Caret $ml={7} /></SplitCell>
            <SplitCell $w={43} $ml={3} $pl={4}><MdFormatListNumbered /><Caret $ml={7} /></SplitCell>
            <Cell $w={28} $ml={2}><MdFormatIndentDecrease /></Cell>
            <Cell $w={28}><MdFormatIndentIncrease /></Cell>
            <Sep $ml={5} $mr={4} />
            <Cell $w={28}><MdFormatClear /></Cell>
            <EditMode>
              <EditIcon><MdEdit /></EditIcon>
              <EditLabel>Bearbeiten</EditLabel>
              <Caret $c="#3f5f9c" />
            </EditMode>
            <Sep $ml={5} $mr={4} />
            <Cell $w={26}><MdKeyboardArrowUp /></Cell>
          </Toolbar>
          <Ruler>
            <RulerTrack>
              {rulerNums.map((n, i) => <RulerCell key={i}>{n}</RulerCell>)}
            </RulerTrack>
            <IndentMark $x={605} />
            <MarginMark $x={605} />
            <MarginMark $x={1207} />
          </Ruler>
          <Content>
            <VRuler>
              {vNums.map((n, i) => <VCell key={i}><VNum>{n}</VNum></VCell>)}
            </VRuler>
            <Sidebar>
              <BackIcon><MdArrowBack /></BackIcon>
              <OutlineHead>Abschluss/ Zusammenfassung</OutlineHead>
              <OutlineRow><Dash />Call To Action</OutlineRow>
            </Sidebar>
            <Page>
              <PageTitle>Call To Action</PageTitle>
              <PageSub>Der “Verkauf”</PageSub>
              <Caret2 />
            </Page>
            <Scrollbar />
            <ExploreBtn><ExploreIcon /></ExploreBtn>
            <IBeam><IBeamIcon /></IBeam>
          </Content>
        </Main>
        <SidePanel>
          <SideApp $mt={0}><CalendarIcon /></SideApp>
          <SideApp $mt={35}><KeepIcon /></SideApp>
          <SideApp $mt={36}><TasksIcon /></SideApp>
          <SideSep />
          <SidePlus><MdAdd /></SidePlus>
          <SideChevron><MdKeyboardArrowRight /></SideChevron>
        </SidePanel>
      </Workspace>

      <Taskbar>
        <StartBtn><WinLogo /></StartBtn>
        <SearchBox>
          <MdSearch size={22} color="#222" style={{ transform: "scaleX(-1)" }} />
          Zur Suche Text hier eingeben
        </SearchBox>
        <TaskSlot $w={47}><TaskView /></TaskSlot>
        <TaskSlot $w={49} $ml={3} $run><Explorer /></TaskSlot>
        <TaskSlot $w={49} $run><OfficeIcon dark="#185abd" light="#41a5ee" mid="#2b7cd3" letter="W" /></TaskSlot>
        <TaskSlot $w={49}><OfficeIcon dark="#107c41" light="#33c481" mid="#21a366" letter="X" /></TaskSlot>
        <TaskSlot $w={49}><Ppt /></TaskSlot>
        <TaskSlot $w={49}><MailIcon /><MailBadge>5</MailBadge></TaskSlot>
        <TaskSlot $w={49} $run $hi><ChromeIcon /></TaskSlot>
        <TaskSlot $w={49} $run><ObsIcon /></TaskSlot>
        <TaskSlot $w={49}><AudacityIcon /></TaskSlot>
        <TaskSlot $w={49}><WritingIcon /></TaskSlot>
        <TaskSlot $w={49}><EdgeIcon /></TaskSlot>
        <TaskSlot $w={49}><FontIcon /></TaskSlot>
        <TaskSlot $w={49}><SpotifyIcon /></TaskSlot>
        <Tray>
          <TrayItem $w={30}><Moon /></TrayItem>
          <TrayItem $w={30}>9°C</TrayItem>
          <TrayItem $w={30} $ml={2}>Klar</TrayItem>
          <TrayItem $w={20} $ml={9}><MdKeyboardArrowUp size={20} /></TrayItem>
          <TrayItem $w={24} $ml={1}><Mic /></TrayItem>
          <TrayItem $w={24} $ml={1}><Cam /></TrayItem>
          <TrayItem $w={20} $ml={1}><Speaker /></TrayItem>
          <TrayItem $w={24} $ml={4}><Wifi /></TrayItem>
          <TrayItem $w={24} $ml={2}><Keyboard /></TrayItem>
          <TrayItem $w={28} $ml={9}>DEU</TrayItem>
          <Clock><span>22:01</span><span>28.10.2021</span></Clock>
          <TrayItem $w={36}><Notify /></TrayItem>
          <TrayEdge />
        </Tray>
      </Taskbar>
    </Root>
  );
}
